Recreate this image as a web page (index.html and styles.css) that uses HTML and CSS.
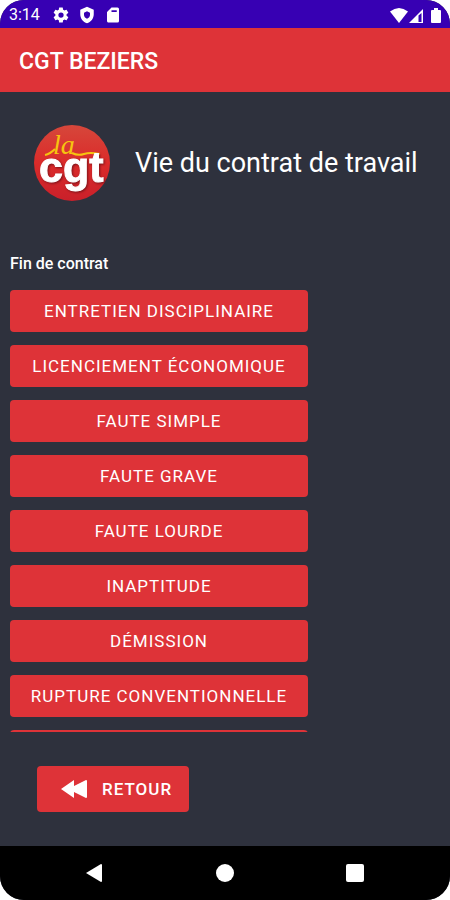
FILE: index.html
```
<!DOCTYPE html>
<html lang="fr">
<head>
  <meta charset="UTF-8">
  <meta name="viewport" content="width=device-width, initial-scale=1.0">
  <title>CGT BEZIERS</title>
  <link rel="stylesheet" href="styles.css">
</head>
<body>
  <div class="phone">
    <div class="status-bar">
      <span class="time">3:14</span>
      <svg viewBox="0 0 24 24" width="18" height="18"><path d="M19.4 13a7.500 7.500 0 0 0 0-2l2.100-1.600a.5.5 0 0 0 .1-.7l-2-3.400a.5.5 0 0 0-.6-.2l-2.500 1a7.300 7.300 0 0 0-1.700-1L14.400 2.400a.5.5 0 0 0-.5-.4h-4a.5.5 0 0 0-.5.4L9.100 5.100a7.700 7.700 0 0 0-1.700 1l-2.500-1a.5.5 0 0 0-.6.200l-2 3.400a.5.500 0 0 0 .1.700L4.500 11a8 8 0 0 0 0 2l-2.100 1.600a.5.5 0 0 0-.1.700l2 3.400c.1.200.4.300.6.200l2.500-1a7.300 7.300 0 0 0 1.700 1l.3 2.700c0 .2.200.4.500.4h4c.3 0 .5-.2.500-.4l.4-2.700a7.700 7.700 0 0 0 1.700-1l2.500 1c.2.100.5 0 .6-.2l2-3.400a.5.500 0 0 0-.1-.7zM12 15.500a3.500 3.500 0 1 1 0-7 3.500 3.500 0 0 1 0 7z"/></svg>
      <svg viewBox="0 0 24 24" width="18" height="18"><path fill-rule="evenodd" d="M12 1L3 5v6c0 5.500 3.800 10.700 9 12 5.200-1.300 9-6.500 9-12V5zM12 7l4 2V12c0 2-1.500 4-4 5-2.500-1-4-3-4-5V9z"/></svg>
      <svg viewBox="0 0 24 24" width="18" height="18"><path fill-rule="evenodd" d="M18 2h-8L4 8v12c0 1.100.9 2 2 2h12a2 2 0 0 0 2-2V4a2 2 0 0 0-2-2zM10 5.500h7v2.500h-7z"/></svg>
      <svg class="signals" viewBox="0 0 52 18" width="52" height="18">
        <path d="M0 5.500Q9 -1.500 18 5.500L9 17z"/>
        <path d="M19 17L33 3v14z"/>
        <path class="signal-gap" d="M28.500 9.500L31.500 7v9h-3z"/>
        <path d="M42 4h2V2h4v2h2q1 0 1 1v11q0 1-1 1h-8q-1 0-1-1V5q0-1 1-1z"/>
      </svg>
    </div>

    <header class="app-bar">
      <h1>CGT BEZIERS</h1>
    </header>

    <main class="content">
      <div class="intro">
        <svg class="logo" viewBox="0 0 76 76" width="76" height="76" role="img">
          <defs>
            <linearGradient id="disc" x1="0" y1="0" x2="0" y2="1">
              <stop offset="0" stop-color="#d6473b"/>
              <stop offset="0.5" stop-color="#db2b2a"/>
              <stop offset="1" stop-color="#c9202a"/>
            </linearGradient>
          </defs>
          <circle cx="38" cy="38" r="38" fill="url(#disc)"/>
          <path class="flourish" d="M11 30Q16 29 21 24M38 28Q44 31 50 29T66 29"/>
          <text class="logo-la" x="19" y="29">la</text>
          <text class="logo-cgt" x="5" y="57">cgt</text>
        </svg>
        <h2>Vie du contrat de travail</h2>
      </div>

      <h3>Fin de contrat</h3>
      <div class="list">
        <button type="button">Entretien disciplinaire</button>
        <button type="button">Licenciement économique</button>
        <button type="button">Faute simple</button>
        <button type="button">Faute grave</button>
        <button type="button">Faute lourde</button>
        <button type="button">Inaptitude</button>
        <button type="button">Démission</button>
        <button type="button">Rupture conventionnelle</button>
        <button type="button"></button>
      </div>

      <div class="actions">
        <button type="button" class="back">
          <svg viewBox="0 0 28 20" width="28" height="20"><path d="M1 10L14 1v6l12-6q1 0 1 1v16q0 1-1 1l-12-6v6z"/></svg>
          Retour
        </button>
      </div>
    </main>

    <nav class="nav-bar">
      <svg viewBox="0 0 20 20" width="20" height="20"><path d="M1 10L16 1q1 0 1 1v16q0 1-1 1z"/></svg>
      <svg viewBox="0 0 20 20" width="20" height="20"><circle cx="10" cy="10" r="9"/></svg>
      <svg viewBox="0 0 20 20" width="20" height="20"><rect x="1" y="1" width="18" height="18" rx="2"/></svg>
    </nav>
  </div>
</body>
</html>
```

FILE: styles.css
```
* {
  box-sizing: border-box;
}
body {
  margin: 0;
  background: #fff;
  color: #fff;
  font-family: Roboto, "Liberation Sans", sans-serif;
}
svg {
  flex: none;
  fill: #fff;
}
.phone {
  display: flex;
  flex-direction: column;
  height: 100vh;
  border-radius: 24px;
  overflow: hidden;
  background: #2e313d;
}

/* status bar */
.status-bar {
  display: flex;
  align-items: center;
  gap: 8px;
  height: 28px;
  padding: 1px 8px 0 9px;
  background: #3700b3;
}
.time {
  margin-right: 4px;
  font-size: 16px;
}
.signals {
  margin-left: auto;
}
.signal-gap {
  fill: #3700b3;
}

.app-bar {
  display: flex;
  align-items: center;
  height: 64px;
  padding: 2px 19px 0;
  background: #de3338;
}
h1, h2, h3 {
  margin: 0;
}
h1 {
  font-size: 23px;
  font-weight: 500;
}

/* content */
.content {
  flex: 1;
  display: flex;
  flex-direction: column;
  min-height: 0;
}
.intro {
  display: flex;
  align-items: center;
  gap: 25px;
  padding: 33px 16px 53px 34px;
}
h2 {
  font-size: 27px;
  font-weight: 400;
  white-space: nowrap;
}
h3 {
  padding: 0 10px;
  font-size: 16px;
  line-height: 20px;
  font-weight: 500;
}
.logo-cgt {
  font-family: "Liberation Sans", Arial, sans-serif;
  font-size: 43px;
  font-weight: bold;
  stroke: #fff;
  stroke-width: 1;
  filter: drop-shadow(1px 1px 1px #7a1218);
}
.logo-la {
  fill: #f6c410;
  font-family: "Liberation Serif", serif;
  font-size: 28px;
  font-style: italic;
}
.flourish {
  fill: none;
  stroke: #f6c410;
  stroke-width: 2;
}
button {
  min-height: 42px;
  padding: 0 20px;
  border: none;
  border-radius: 4px;
  background: #de3338;
  color: #fff;
  font-family: inherit;
  font-size: 17px;
  font-weight: 400;
  letter-spacing: 1px;
  text-transform: uppercase;
  white-space: nowrap;
  cursor: pointer;
}
button:hover {
  background: #c92c31;
}
.list {
  flex: 1;
  display: grid;
  align-content: start;
  grid-template-columns: 298px;
  gap: 13px;
  min-height: 0;
  margin-top: 16px;
  padding: 0 10px;
  overflow: hidden;
}
.actions {
  padding: 34px 37px;
}
.back {
  display: flex;
  align-items: center;
  gap: 14px;
  min-height: 46px;
  padding: 0 17px 0 23px;
  font-weight: 500;
}

.nav-bar {
  display: flex;
  align-items: center;
  justify-content: space-between;
  height: 54px;
  padding: 0 85px;
  background: #000;
}
```
